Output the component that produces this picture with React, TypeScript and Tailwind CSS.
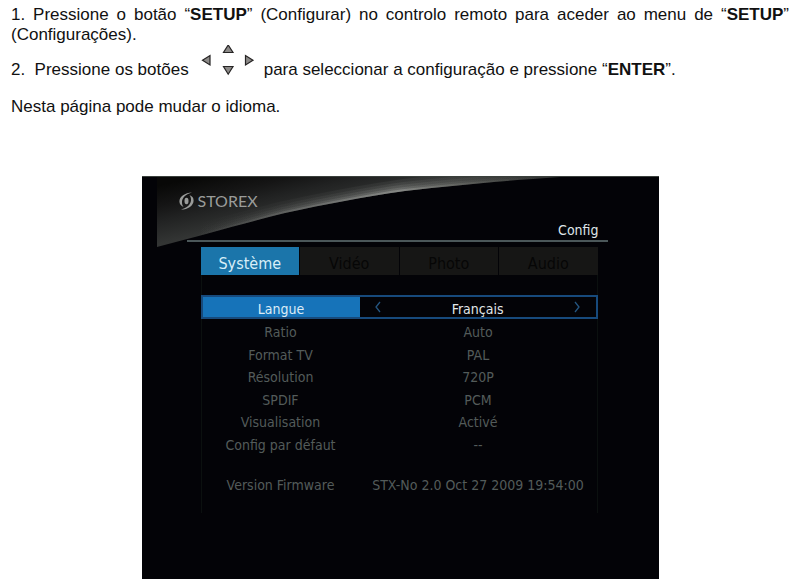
import React, { useState } from 'react';

type Setting = {
  label: string;
  value: string;
};

const tabs = ['Système', 'Vidéo', 'Photo', 'Audio'];

const languages = ['Français', 'English', 'Português', 'Español'];

const settings: Setting[] = [
  { label: 'Ratio', value: 'Auto' },
  { label: 'Format TV', value: 'PAL' },
  { label: 'Résolution', value: '720P' },
  { label: 'SPDIF', value: 'PCM' },
  { label: 'Visualisation', value: 'Activé' },
  { label: 'Config par défaut', value: '--' },
];

// The four direction keys of the remote
const DirectionKeys = () => (
  <svg
    role="img"
    aria-label="esquerda, cima, baixo, direita"
    className="mr-[9px] ml-[12px] h-[32px] w-[54px] shrink-0"
    viewBox="0 0 54 32"
    fill="#8c8a88"
    stroke="#262424"
    strokeWidth="1.2"
  >
    <path d="M9 10.5V20L1.5 15.2Z" />
    <path d="M22.5 7.5H32L27.2 0Z" />
    <path d="M22.5 21.5H32L27.2 29.2Z" />
    <path d="M44.5 10.5V20L52 15.2Z" />
  </svg>
);

// Grey sweep across the top left corner of the screen, brightest along its lower edge
const Sweep = () => (
  <svg className="absolute top-0 left-[15px] h-[70px] w-[403px]" viewBox="0 0 403 70" aria-hidden="true">
    <defs>
      <clipPath id="sweep-shape">
        <path d="M0 0H403C343 4 300 8 248 14C205 20 170 27 128 36C80 48 50 57 0 70Z" />
      </clipPath>
      <linearGradient id="sweep-base" gradientUnits="userSpaceOnUse" x1="60" y1="-4" x2="72" y2="52">
        <stop offset="0" stopColor="#080807" />
        <stop offset="0.35" stopColor="#151515" />
        <stop offset="0.6" stopColor="#212222" />
        <stop offset="1" stopColor="#333534" />
      </linearGradient>
      <linearGradient id="sweep-light" gradientUnits="userSpaceOnUse" x1="0" y1="0" x2="403" y2="0">
        <stop offset="0.1" stopColor="#a4a6a3" stopOpacity="0" />
        <stop offset="0.35" stopColor="#a4a6a3" stopOpacity="0.6" />
        <stop offset="0.6" stopColor="#b0b2ae" />
        <stop offset="0.75" stopColor="#8c8e88" stopOpacity="0.7" />
        <stop offset="0.95" stopColor="#6c6e66" stopOpacity="0" />
      </linearGradient>
    </defs>
    <g clipPath="url(#sweep-shape)">
      <path d="M0 0H403V70H0Z" fill="url(#sweep-base)" />
      <g fill="none" stroke="url(#sweep-light)">
        <path d="M403 0C343 4 300 8 248 14C205 20 170 27 128 36C80 48 50 57 0 70" strokeWidth="24" opacity="0.08" />
        <path d="M403 0C343 4 300 8 248 14C205 20 170 27 128 36C80 48 50 57 0 70" strokeWidth="18" opacity="0.1" />
        <path d="M403 0C343 4 300 8 248 14C205 20 170 27 128 36C80 48 50 57 0 70" strokeWidth="13" opacity="0.14" />
        <path d="M403 0C343 4 300 8 248 14C205 20 170 27 128 36C80 48 50 57 0 70" strokeWidth="8" opacity="0.2" />
        <path d="M403 0C343 4 300 8 248 14C205 20 170 27 128 36C80 48 50 57 0 70" strokeWidth="4" opacity="0.4" />
      </g>
    </g>
  </svg>
);

const Logo = () => (
  <div className="flex items-center gap-1 text-[#9a9c9a]">
    <svg className="h-[18px] w-[15px]" viewBox="0 0 15 18" fill="currentColor" aria-hidden="true">
      <path d="M13 0.4C6 0.6 0.4 4.4 0.4 9.6C0.4 12.2 2 14 4.6 15C3.4 13.4 2.8 11.6 3 9.4C3.4 5.4 7 2 13 0.4Z" />
      <path d="M2 17.6C9 17.4 14.6 13.6 14.6 8.4C14.6 5.8 13 4 10.4 3C11.6 4.6 12.2 6.4 12 8.6C11.6 12.6 8 16 2 17.6Z" />
      <ellipse cx="7.5" cy="9" rx="2" ry="3.2" />
    </svg>
    <span className="font-['Lato',sans-serif] text-[16px] leading-[18px]">STOREX</span>
  </div>
);

const Chevron = ({ d }: { d: string }) => (
  <svg className="h-[12px] w-[6px]" viewBox="0 0 6 12" fill="none" stroke="#245580" strokeWidth="1.3" aria-hidden="true">
    <path d={d} />
  </svg>
);

const SetupScreen = () => {
  const [activeTab, setActiveTab] = useState(tabs[0]);
  const [language, setLanguage] = useState(0);

  const step = (by: number) => {
    setLanguage((language + by + languages.length) % languages.length);
  };

  return (
    <section className="relative mx-auto w-full max-w-[517px] border-t border-[#3a403c] bg-[#030307] pb-[66px] font-['DejaVu_Sans_Condensed','DejaVu_Sans',sans-serif] text-[14px] text-[#535b5a]">
      <Sweep />

      <div className="relative pr-[51px] pl-[45px]">
        <header className="-ml-[8px] pt-[15px]">
          <Logo />
        </header>

        <div className="border-b-2 border-[#4b5759] pt-[10px] pr-[9px] text-right leading-[20px] text-[#dfe5e8]">
          <h1>Config</h1>
        </div>

        <div className="mt-[5px] mr-[10px] ml-[14px] grid grid-cols-4 gap-px">
          {tabs.map((tab) => (
            <button
              key={tab}
              type="button"
              onClick={() => setActiveTab(tab)}
              className={
                tab === activeTab
                  ? 'h-[28px] bg-[#1b75aa] pt-[6px] text-[16px] leading-[22px] text-[#d8eef8]'
                  : 'h-[28px] bg-[#161615] pt-[6px] text-[16px] leading-[22px] text-[#060606]'
              }
            >
              {tab}
            </button>
          ))}
        </div>

        <div className="mr-[10px] ml-[14px] border-x border-[#0b100f] pt-[20px] pb-[18px]">
          <div className="-mx-px flex border-2 border-[#174a7c]">
            <div className="w-2/5 bg-[#1673b9] pt-[4px] text-center leading-[16px] text-[#dcecf6]">Langue</div>
            <div className="flex w-3/5 items-center justify-between px-[15px]">
              <button type="button" aria-label="Langue précédente" onClick={() => step(-1)}>
                <Chevron d="M5 1L1 6L5 11" />
              </button>
              <span className="pt-[4px] leading-[16px] text-[#e2e6e8]">{languages[language]}</span>
              <button type="button" aria-label="Langue suivante" onClick={() => step(1)}>
                <Chevron d="M1 1L5 6L1 11" />
              </button>
            </div>
          </div>

          <table className="mt-[2px] h-[135px] w-full table-fixed text-center leading-[20px]">
            <tbody>
              {settings.map((setting) => (
                <tr key={setting.label}>
                  <th scope="row" className="w-2/5 font-normal">
                    {setting.label}
                  </th>
                  <td>{setting.value}</td>
                </tr>
              ))}
            </tbody>
          </table>

          <dl className="mt-[19px] flex text-center leading-[20px]">
            <dt className="w-2/5">Version Firmware</dt>
            <dd className="w-3/5 whitespace-nowrap">STX-No 2.0 Oct 27 2009 19:54:00</dd>
          </dl>
        </div>
      </div>
    </section>
  );
};

export default function App() {
  return (
    <main className="min-h-screen bg-white px-[11px] pt-[5px] pb-1 font-['Liberation_Sans',Arial,sans-serif] text-[17px] leading-[20px] text-[#111]">
      <p className="text-justify">
        1. Pressione o botão “<b>SETUP</b>” (Configurar) no controlo remoto para aceder ao menu de “<b>SETUP</b>”{' '}
        <span>(Configurações).</span>
      </p>
      <div className="flex flex-wrap items-start">
        <p className="pt-[15px]">2.&nbsp; Pressione os botões</p>
        <DirectionKeys />
        <p className="pt-[15px]">
          para seleccionar a configuração e pressione “<b>ENTER</b>”.
        </p>
      </div>
      <p className="mt-[17px] mb-[59px]">Nesta página pode mudar o idioma.</p>
      <SetupScreen />
    </main>
  );
}
